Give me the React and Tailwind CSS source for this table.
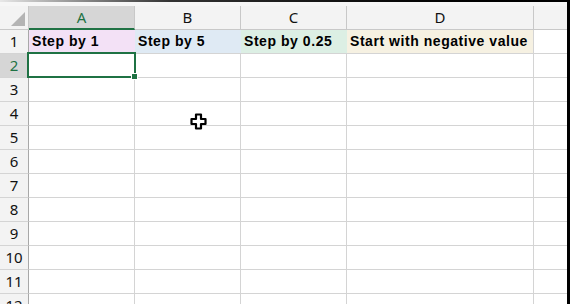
import React from "react";

const COLS = [
  { l: "A", w: "w-[106px]" },
  { l: "B", w: "w-[106px]" },
  { l: "C", w: "w-[106px]" },
  { l: "D", w: "w-[187px]" },
];

const ROW1 = [
  { t: "Step by 1", bg: "bg-[#f3e1f6]" },
  { t: "Step by 5", bg: "bg-[#dfeaf4]" },
  { t: "Step by 0.25", bg: "bg-[#dcefe4]" },
  { t: "Start with negative value", bg: "bg-[#f6f1e2]" },
];

function Cursor() {
  return (
    <svg width="17" height="17" viewBox="0 0 17 17" className="absolute left-[190px] top-[113px]">
      <path
        d="M6 1.5h5v4.5h4.5v5H11v4.5H6V11H1.5V6H6z"
        fill="white"
        stroke="black"
        strokeWidth="2.2"
        strokeLinejoin="round"
      />
    </svg>
  );
}

export default function App() {
  const rows = Array.from({ length: 12 }, (_, i) => i + 1);
  return (
    <div className="relative w-[570px] h-[304px] overflow-hidden bg-white border-r-[3px] border-black font-['Noto_Sans',sans-serif]">
      <div className="h-[2px] bg-gradient-to-r from-[#e8e8e8] via-[#333] via-30% to-black" />
      <div className="h-[4px] bg-[#f6f6f6]" />
      {/* column header */}
      <div className="flex h-[24px] bg-[#f3f3f3] border-b border-[#c8c8c8]">
        <div className="relative w-[29px] shrink-0 border-r border-[#c8c8c8]">
          <svg width="14" height="14" viewBox="0 0 14 14" className="absolute right-[3px] bottom-[3px]">
            <path d="M14 0V14H0Z" fill="#b4b4b4" />
          </svg>
        </div>
        {COLS.map((c, i) => (
          <div
            key={c.l}
            className={`${c.w} shrink-0 flex items-center justify-center text-[15px] border-r border-[#c8c8c8] ${
              i === 0 ? "bg-[#d6d6d6] text-[#1f7244] border-b-2 border-b-[#1f7244] -mb-px" : "text-[#111]"
            }`}
          >
            {c.l}
          </div>
        ))}
        <div className="flex-1" />
      </div>
      {rows.map((r) => (
        <div key={r} className="flex h-[24px]">
          <div
            className={`w-[29px] shrink-0 flex items-center justify-center text-[15px] border-r border-[#a8a8a8] border-b border-b-[#d4d4d4] ${
              r === 2 ? "bg-[#d6d6d6] text-[#1f7244]" : "bg-[#f3f3f3] text-[#111]"
            }`}
          >
            {r}
          </div>
          {r === 1
            ? ROW1.map((c, i) => (
                <div
                  key={i}
                  className={`${COLS[i].w} shrink-0 ${c.bg} ${i === 3 ? "border-r border-[#d4d4d4]" : ""} border-b border-b-[#d4d4d4] flex items-center pl-[3px] font-['Liberation_Sans',sans-serif] font-bold text-[14px] tracking-[0.55px] text-black whitespace-nowrap`}
                >
                  {c.t}
                </div>
              ))
            : COLS.map((c) => (
                <div key={c.l} className={`${c.w} shrink-0 border-r border-b border-[#d4d4d4]`} />
              ))}
          <div className="flex-1 border-b border-[#d4d4d4]" />
        </div>
      ))}
      {/* selection */}
      <div className="absolute left-[27px] top-[52px] w-[109px] h-[26px] border-2 border-[#1f7244]" />
      <div className="absolute left-[131px] top-[73px] w-[7px] h-[7px] bg-[#1f7244] border border-white" />
      <Cursor />
    </div>
  );
}
